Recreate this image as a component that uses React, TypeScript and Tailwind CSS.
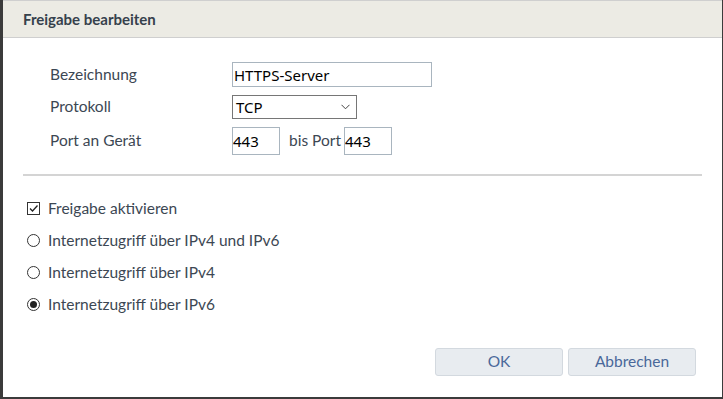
import React from "react";

const font = { fontFamily: '"Lato", "Open Sans", sans-serif' };

const Radio = ({ checked }: { checked?: boolean }) => (
  <span className="flex h-[13px] w-[13px] items-center justify-center rounded-full border border-[#333] bg-white">
    {checked && <span className="h-[7px] w-[7px] rounded-full bg-[#222]" />}
  </span>
);

const Check = () => (
  <span className="flex h-[13px] w-[13px] items-center justify-center border border-[#333] bg-white">
    <svg width="11" height="11" viewBox="0 0 11 11" fill="none">
      <path d="M2 5.5 L4.5 8 L9.5 2.5" stroke="#222" strokeWidth="1.3" />
    </svg>
  </span>
);

export default function App() {
  const options = [
    { label: "Internetzugriff über IPv4 und IPv6", checked: false },
    { label: "Internetzugriff über IPv4", checked: false },
    { label: "Internetzugriff über IPv6", checked: true },
  ];

  return (
    <div className="flex h-[399px] w-[723px] bg-[#3b3b3b] pl-[3px] pr-[1px] pb-[2px]" style={font}>
      <div className="flex flex-1 flex-col bg-white text-[15.5px] text-[#3c4753]">
        <div className="flex h-[38px] items-center border-y border-[#cfcfcf] bg-[#ecebe4] pl-[20px] text-[15px] font-bold text-[#36414c]">
          Freigabe bearbeiten
        </div>

        <div className="grid grid-cols-[182px_1fr] items-center gap-y-[8px] pl-[47px] pt-[24px]">
          <span>Bezeichnung</span>
          <input
            className="h-[25px] w-[200px] border border-[#a9b5bf] px-[1px] text-[15px] text-black outline-none"
            style={{ fontFamily: '"Noto Sans", sans-serif' }}
            defaultValue="HTTPS-Server"
          />
          <span>Protokoll</span>
          <div
            className="flex h-[24px] w-[125px] items-center justify-between border border-[#767676] pl-[3px] pr-[6px] text-[15px] text-black"
            style={{ fontFamily: '"Noto Sans", sans-serif' }}
          >
            TCP
            <svg width="9" height="6" viewBox="0 0 9 6" fill="none">
              <path d="M0.5 0.8 L4.5 4.8 L8.5 0.8" stroke="#444" strokeWidth="1" />
            </svg>
          </div>
          <span>Port an Gerät</span>
          <div className="flex items-center">
            <input
              className="h-[28px] w-[48px] border border-[#a9b5bf] px-0 text-[15px] text-black outline-none"
              style={{ fontFamily: '"Noto Sans", sans-serif' }}
              defaultValue="443"
            />
            <span className="ml-[9px] mr-[3px]">bis Port</span>
            <input
              className="h-[28px] w-[48px] border border-[#a9b5bf] px-0 text-[15px] text-black outline-none"
              style={{ fontFamily: '"Noto Sans", sans-serif' }}
              defaultValue="443"
            />
          </div>
        </div>

        <div className="mx-[20px] mt-[19px] h-[2px] bg-[#d4d4d4]" />

        <div className="flex flex-col gap-y-[13px] pl-[24px] pt-[23px]">
          <label className="flex h-[19px] items-center gap-[8px]">
            <Check />
            <span>Freigabe aktivieren</span>
          </label>
          {options.map((o) => (
            <label key={o.label} className="flex h-[19px] items-center gap-[8px]">
              <Radio checked={o.checked} />
              <span>{o.label}</span>
            </label>
          ))}
        </div>

        <div className="mt-auto flex justify-end gap-[5px] pb-[21px] pr-[26px]">
          <button className="h-[28px] w-[128px] rounded-[3px] border border-[#d3d9df] bg-[#e8ecf0] text-[15.5px] text-[#4a689a]">
            OK
          </button>
          <button className="h-[28px] w-[128px] rounded-[3px] border border-[#d3d9df] bg-[#e8ecf0] text-[15.5px] text-[#4a689a]">
            Abbrechen
          </button>
        </div>
      </div>
    </div>
  );
}
